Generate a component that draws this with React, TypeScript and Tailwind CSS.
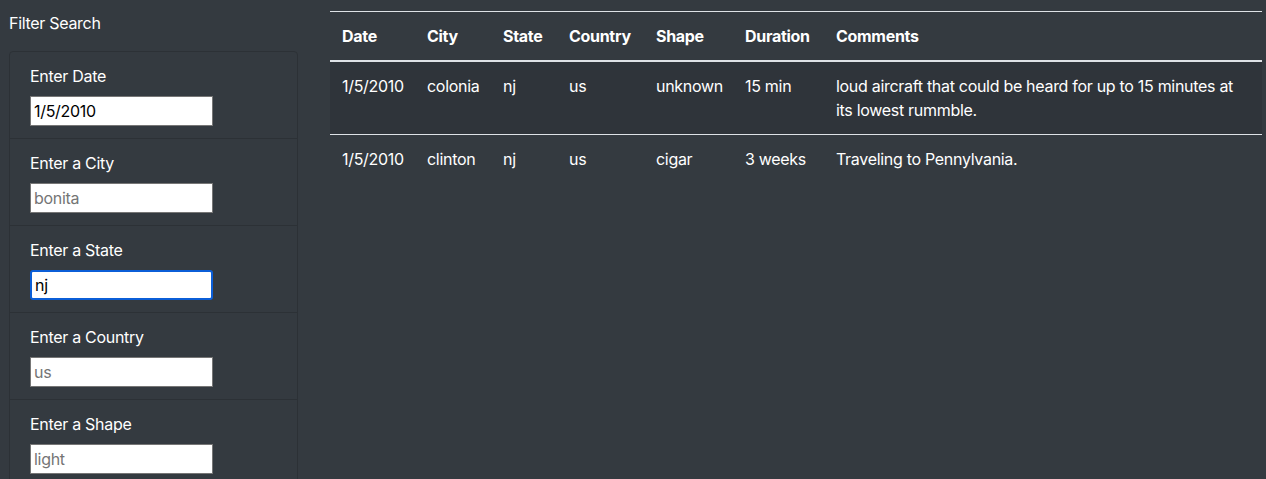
import React from 'react';

const fields = [
  { label: 'Enter Date', value: '1/5/2010', placeholder: '' },
  { label: 'Enter a City', value: '', placeholder: 'bonita' },
  { label: 'Enter a State', value: 'nj', placeholder: '', focused: true },
  { label: 'Enter a Country', value: '', placeholder: 'us' },
  { label: 'Enter a Shape', value: '', placeholder: 'light' },
];

const columns = [
  { name: 'Date', w: 'w-[85px]' },
  { name: 'City', w: 'w-[76px]' },
  { name: 'State', w: 'w-[66px]' },
  { name: 'Country', w: 'w-[87px]' },
  { name: 'Shape', w: 'w-[89px]' },
  { name: 'Duration', w: 'w-[91px]' },
  { name: 'Comments', w: '' },
];

const sightings = [
  ['1/5/2010', 'colonia', 'nj', 'us', 'unknown', '15 min', 'loud aircraft that could be heard for up to 15 minutes at its lowest rummble.'],
  ['1/5/2010', 'clinton', 'nj', 'us', 'cigar', '3 weeks', 'Traveling to Pennylvania.'],
];

export default function App() {
  return (
    <div className="min-h-[479px] bg-[#343a40] text-white text-[16px] leading-6 tracking-[-0.3px] font-['Inter','Liberation_Sans',sans-serif] flex overflow-hidden">
      {/* Filter sidebar */}
      <aside className="w-[330px] shrink-0 pl-[9px] pr-[32px]">
        <h5 className="pt-[11px] pb-[16px]">Filter Search</h5>
        <ul className="border border-[#2c3136] rounded-[4px]">
          {fields.map((f, i) => (
            <li key={f.label} className={`px-5 pt-3 pb-3 ${i > 0 ? 'border-t border-[#2c3136]' : ''}`}>
              <label className="block mb-2">{f.label}</label>
              <input
                readOnly
                value={f.value}
                placeholder={f.placeholder}
                className={
                  f.focused
                    ? 'block w-[183px] h-[30px] px-[3px] bg-white text-black placeholder:text-[#757575] border-2 border-[#0b5ed7] rounded-[3px] outline-none'
                    : 'block w-[183px] h-[30px] px-[3px] bg-white text-black placeholder:text-[#757575] border border-[#767676] outline-none'
                }
              />
            </li>
          ))}
        </ul>
      </aside>

      {/* Results table */}
      <main className="flex-1 pt-[11px] pr-[4px]">
        <table className="w-full table-fixed border-collapse">
          <thead>
            <tr className="border-t border-[#dee2e6]">
              {columns.map((c) => (
                <th key={c.name} className={`${c.w} text-left font-bold p-3 border-b-2 border-[#dee2e6]`}>
                  {c.name}
                </th>
              ))}
            </tr>
          </thead>
          <tbody>
            {sightings.map((row, i) => (
              <tr key={i} className={`border-t border-[#dee2e6] ${i % 2 === 0 ? 'bg-[#2f343a]' : ''}`}>
                {row.map((cell, j) => (
                  <td key={j} className="p-3 align-top">
                    {cell}
                  </td>
                ))}
              </tr>
            ))}
          </tbody>
        </table>
      </main>
    </div>
  );
}
